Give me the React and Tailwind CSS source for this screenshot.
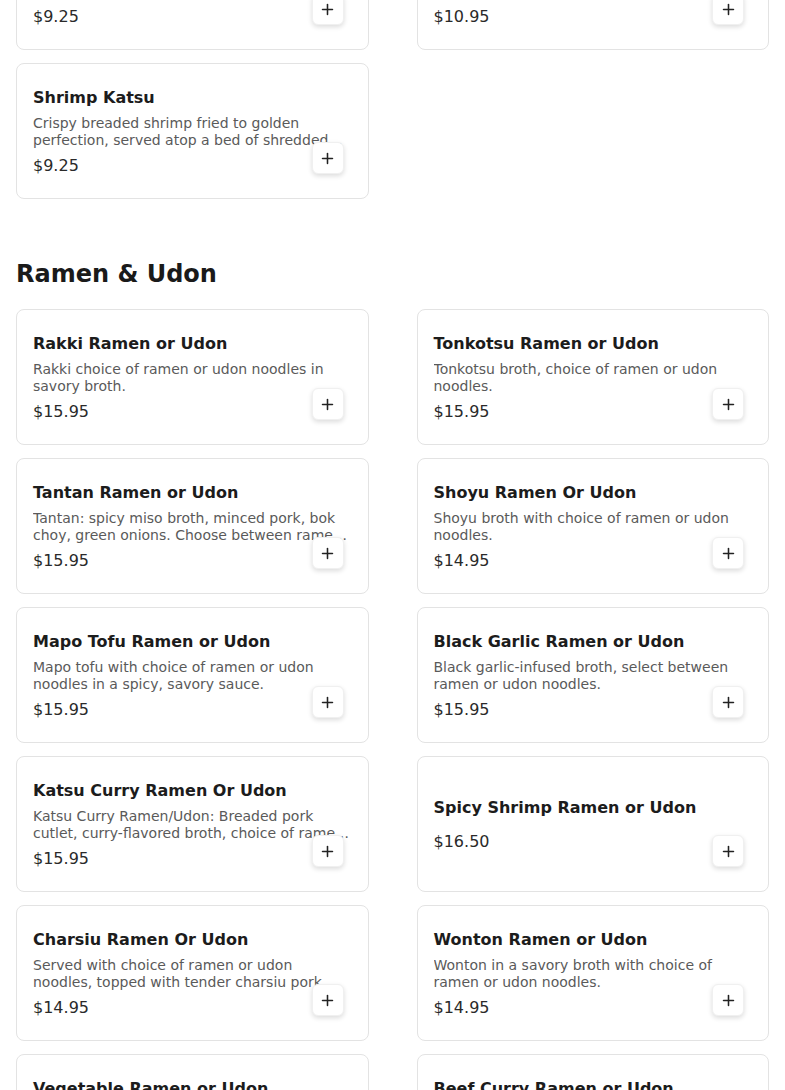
import React from 'react';
import { Plus } from 'lucide-react';

const previous = [
  {
    name: 'Chicken Katsu',
    desc: 'Crispy breaded chicken cutlet fried until golden brown, served with rice and katsu sauce.',
    price: '9.25',
  },
  {
    name: 'Pork Katsu Curry',
    desc: 'Breaded pork cutlet served with Japanese curry and steamed white rice.',
    price: '10.95',
  },
  {
    name: 'Shrimp Katsu',
    desc: 'Crispy breaded shrimp fried to golden perfection, served atop a bed of shredded cabbage.',
    price: '9.25',
  },
];

const ramen = [
  { name: 'Rakki Ramen or Udon', desc: 'Rakki choice of ramen or udon noodles in savory broth.', price: '15.95' },
  { name: 'Tonkotsu Ramen or Udon', desc: 'Tonkotsu broth, choice of ramen or udon noodles.', price: '15.95' },
  {
    name: 'Tantan Ramen or Udon',
    desc: 'Tantan: spicy miso broth, minced pork, bok choy, green onions. Choose between ramen or udon noodles.',
    price: '15.95',
  },
  { name: 'Shoyu Ramen Or Udon', desc: 'Shoyu broth with choice of ramen or udon noodles.', price: '14.95' },
  {
    name: 'Mapo Tofu Ramen or Udon',
    desc: 'Mapo tofu with choice of ramen or udon noodles in a spicy, savory sauce.',
    price: '15.95',
  },
  {
    name: 'Black Garlic Ramen or Udon',
    desc: 'Black garlic-infused broth, select between ramen or udon noodles.',
    price: '15.95',
  },
  {
    name: 'Katsu Curry Ramen Or Udon',
    desc: 'Katsu Curry Ramen/Udon: Breaded pork cutlet, curry-flavored broth, choice of ramen or udon noodles.',
    price: '15.95',
  },
  { name: 'Spicy Shrimp Ramen or Udon', desc: '', price: '16.50' },
  {
    name: 'Charsiu Ramen Or Udon',
    desc: 'Served with choice of ramen or udon noodles, topped with tender charsiu pork slices.',
    price: '14.95',
  },
  {
    name: 'Wonton Ramen or Udon',
    desc: 'Wonton in a savory broth with choice of ramen or udon noodles.',
    price: '14.95',
  },
  {
    name: 'Vegetable Ramen or Udon',
    desc: 'Assorted fresh vegetables in a light broth with choice of ramen or udon noodles.',
    price: '14.95',
  },
  {
    name: 'Beef Curry Ramen or Udon',
    desc: 'Tender beef in a rich curry broth with choice of ramen or udon noodles.',
    price: '15.95',
  },
];

const ItemCard = ({ item }) => (
  <div className="relative h-[136px] rounded-lg border border-[#e3e3e3] bg-white p-4 flex flex-col justify-center">
    <h3 className="text-base leading-[19px] font-bold text-[#1c1c1c] mb-2">{item.name}</h3>
    <p className="text-sm leading-[17px] text-[#5a5a5a] mb-[7px] line-clamp-2">{item.desc}</p>
    <div className="text-base leading-[19px] text-[#2a2a2a]">${item.price}</div>
    <button className="absolute right-6 bottom-6 w-8 h-8 rounded-md bg-white shadow-[0_2px_5px_rgba(0,0,0,0.14)] border border-[#f0f0f0] flex items-center justify-center text-[#222]">
      <Plus size={17} strokeWidth={2.2} />
    </button>
  </div>
);

const App = () => {
  return (
    <div className="h-[1090px] overflow-hidden bg-white" style={{ fontFamily: '"DejaVu Sans", sans-serif' }}>
      <div className="px-4 -mt-[86px]">
        <section>
          <div className="grid grid-cols-2 gap-x-12 gap-y-[13px]">
            {previous.map((item) => (
              <ItemCard key={item.name} item={item} />
            ))}
          </div>
        </section>

        <section className="mt-[59px]">
          <h2 className="text-2xl leading-8 font-bold text-[#1a1a1a] mb-[19px]">Ramen &amp; Udon</h2>
          <div className="grid grid-cols-2 gap-x-12 gap-y-[13px]">
            {ramen.map((item) => (
              <ItemCard key={item.name} item={item} />
            ))}
          </div>
        </section>
      </div>
    </div>
  );
};

export default App;
